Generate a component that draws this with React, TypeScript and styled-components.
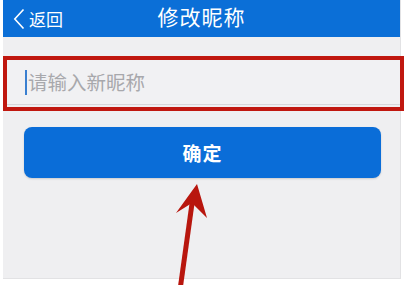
import styled, { createGlobalStyle } from "styled-components";

const Global = createGlobalStyle`
  html, body {
    margin: 0;
    padding: 0;
    background: #ffffff;
  }
  body {
    font-family: "Noto Sans CJK SC", "Noto Sans", sans-serif;
  }
`;

const Page = styled.div`
  position: relative;
  width: 405px;
  height: 285px;
  overflow: hidden;
`;

const Screen = styled.div`
  margin-left: 3px;
  width: 398px;
  height: 279px;
  background: #efeff1;
  display: flex;
  flex-direction: column;
  border-right: 1px solid #e2e2e4;
  border-bottom: 1px solid #e2e2e4;
  box-sizing: border-box;
`;

const Header = styled.header`
  height: 37px;
  background: #0b6fd7;
  display: grid;
  grid-template-columns: 1fr auto 1fr;
  align-items: center;
  color: #ffffff;
`;

const Back = styled.div`
  display: flex;
  align-items: center;
  gap: 4px;
  padding-left: 10px;
  font-size: 17px;
  line-height: 1;
`;

const Title = styled.div`
  font-size: 21px;
  letter-spacing: 1px;
  line-height: 1;
  margin-top: -4px;
`;

const Annotated = styled.div`
  margin-top: 19px;
  margin-right: -4px;
  height: 55px;
  border: 4px solid #c0170f;
  box-sizing: border-box;
  display: flex;
`;

const Field = styled.div`
  flex: 1;
  display: flex;
  align-items: center;
  padding-left: 18px;
  margin-bottom: 2px;
  border-bottom: 1px solid #d7d7da;
  background: #f1f1f3;
`;

const Caret = styled.span`
  width: 2px;
  height: 25px;
  background: #3a7fd0;
  margin-right: 1px;
`;

const Placeholder = styled.span`
  font-size: 19.5px;
  color: #a8a8ac;
  line-height: 1;
  margin-top: -1px;
`;

const Confirm = styled.button`
  margin: 16px 19px 0 21px;
  height: 51px;
  border: none;
  border-radius: 8px;
  background: #0a6dd8;
  color: #ffffff;
  font-family: inherit;
  font-size: 19px;
  font-weight: 700;
  letter-spacing: 1px;
  box-shadow: 0 1px 2px rgba(0, 0, 0, 0.15);
`;

const Overlay = styled.svg`
  position: absolute;
  left: 0;
  top: 0;
  pointer-events: none;
`;

export default function App() {
  return (
    <Page>
      <Global />
      <Screen>
        <Header>
          <Back>
            <svg width="12" height="22" viewBox="0 0 12 22">
              <polyline
                points="10.5,1.5 1.8,11 10.5,20.5"
                fill="none"
                stroke="#ffffff"
                strokeWidth="1.6"
                strokeLinejoin="miter"
              />
            </svg>
            返回
          </Back>
          <Title>修改昵称</Title>
          <div />
        </Header>
        <Annotated>
          <Field>
            <Caret />
            <Placeholder>请输入新昵称</Placeholder>
          </Field>
        </Annotated>
        <Confirm>确定</Confirm>
      </Screen>
      <Overlay width="405" height="285" viewBox="0 0 405 285">
        <line x1="192.5" y1="200" x2="180" y2="290" stroke="#b8160e" strokeWidth="5" />
        <polygon points="197,184 176,213 192,203 207,218" fill="#b8160e" />
      </Overlay>
    </Page>
  );
}
